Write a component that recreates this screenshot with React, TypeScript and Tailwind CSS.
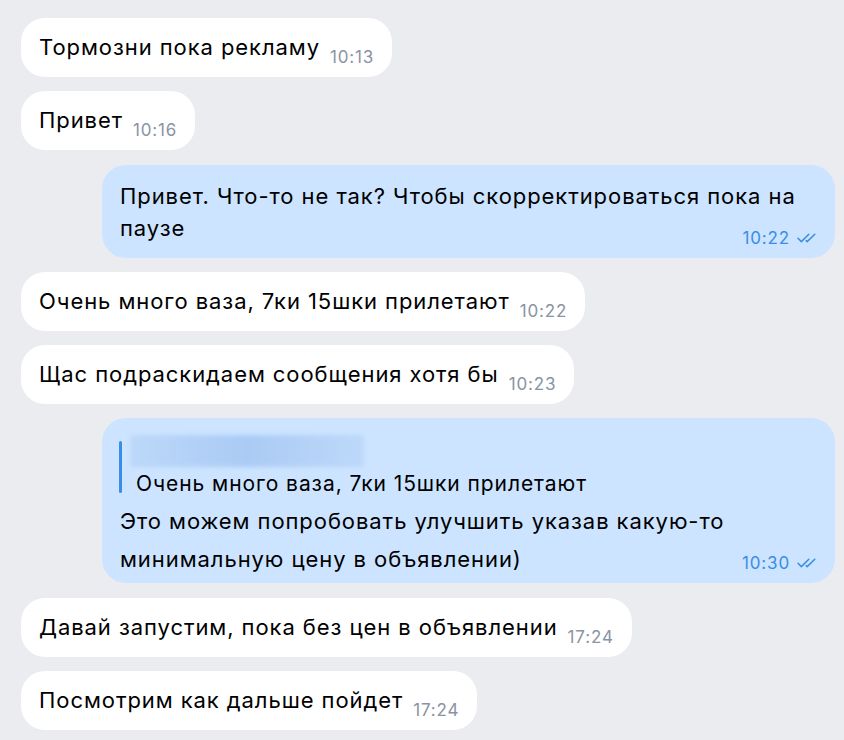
import React from "react";

type Msg =
  | { kind: "in"; text: string; time: string }
  | { kind: "out"; lines: string[]; time: string; quote?: string };

const messages: Msg[] = [
  { kind: "in", text: "Тормозни пока рекламу", time: "10:13" },
  { kind: "in", text: "Привет", time: "10:16" },
  {
    kind: "out",
    lines: ["Привет. Что-то не так? Чтобы скорректироваться пока на", "паузе"],
    time: "10:22",
  },
  { kind: "in", text: "Очень много ваза, 7ки 15шки прилетают", time: "10:22" },
  { kind: "in", text: "Щас подраскидаем сообщения хотя бы", time: "10:23" },
  {
    kind: "out",
    quote: "Очень много ваза, 7ки 15шки прилетают",
    lines: ["Это можем попробовать улучшить указав какую-то", "минимальную цену в объявлении)"],
    time: "10:30",
  },
  { kind: "in", text: "Давай запустим, пока без цен в объявлении", time: "17:24" },
  { kind: "in", text: "Посмотрим как дальше пойдет", time: "17:24" },
];

const DoubleCheck = () => (
  <svg width="20" height="10" viewBox="0 0 20 10" fill="none" className="ml-[7px]">
    <path d="M1 5.2 L4.4 8.6 L11.8 1.2" stroke="#3a8de6" strokeWidth="1.5" strokeLinecap="round" strokeLinejoin="round" />
    <path d="M9.2 7.6 L10.2 8.6 L17.8 1.2" stroke="#3a8de6" strokeWidth="1.5" strokeLinecap="round" strokeLinejoin="round" />
  </svg>
);

const Incoming = ({ text, time }: { text: string; time: string }) => (
  <div className="ml-[21px] self-start whitespace-nowrap rounded-[24px] bg-white pb-[14px] pl-[18px] pr-[18px] pt-[13px] text-[22px] leading-[32px] text-black">
    {text}
    <span className="relative top-[8px] ml-[10px] text-[17px] leading-none tracking-[0.05em] text-[#8a93a3]">
      {time}
    </span>
  </div>
);

const Outgoing = ({ lines, time, quote }: { lines: string[]; time: string; quote?: string }) => (
  <div
    className={`relative mr-[9px] w-[733px] self-end rounded-[24px] bg-[#cce4ff] px-[18px] text-[22px] text-black ${
      quote ? "pb-[5px] pt-[17px] leading-[38px]" : "pb-[14px] pt-[15px] leading-[32px]"
    }`}
  >
    {quote && (
      <div className="flex">
        <div className="-ml-[1px] mt-[6px] h-[52px] w-[3px] shrink-0 rounded-full bg-[#3a8de6]" />
        <div className="flex flex-col">
          <div className="ml-[8px] h-[32px] w-[234px] rounded-[3px] bg-gradient-to-r from-[#bcd8f9] via-[#abcbf5] to-[#bdd8f9] blur-[2px]" />
          <div className="mt-[4px] pl-[14px] text-[21px] leading-[26px]">{quote}</div>
        </div>
      </div>
    )}
    <div className={quote ? "mt-[5px]" : ""}>
      {lines.map((l, i) => (
        <div key={i}>{l}</div>
      ))}
    </div>
    <div className="absolute bottom-[10px] right-[18px] flex items-center text-[17px] leading-[20px] tracking-[0.05em] text-[#3a8de6]">
      {time}
      <DoubleCheck />
    </div>
  </div>
);

export default function App() {
  return (
    <div
      className="flex min-h-[740px] w-[844px] flex-col gap-[14.3px] bg-[#ebecf0] pt-[18px] tracking-[0.058em]"
      style={{ fontFamily: "Inter, 'Noto Sans', sans-serif" }}
    >
      {messages.map((m, i) =>
        m.kind === "in" ? (
          <Incoming key={i} text={m.text} time={m.time} />
        ) : (
          <Outgoing key={i} lines={m.lines} time={m.time} quote={m.quote} />
        )
      )}
    </div>
  );
}
